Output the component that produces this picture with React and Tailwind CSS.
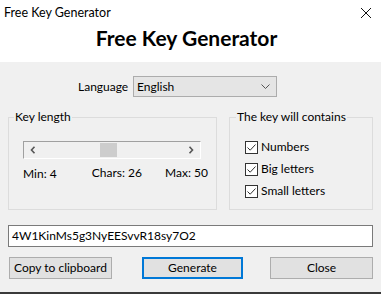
import React from "react";

const F = { fontFamily: 'Lato, "Noto Sans", sans-serif' };

function Check({ label }) {
  return (
    <div className="flex items-center h-[22px]">
      <div className="w-[13px] h-[13px] border border-[#333] bg-white flex items-center justify-center">
        <svg width="11" height="11" viewBox="0 0 11 11">
          <path d="M1.5 5.5 L4.2 8.2 L9.5 2.5" fill="none" stroke="#333" strokeWidth="1" />
        </svg>
      </div>
      <span className="ml-[3px] text-[12px] text-black leading-[16px]">{label}</span>
    </div>
  );
}

export default function App() {
  return (
    <div className="w-[381px] h-[294px] flex flex-col bg-white overflow-hidden" style={F}>
      <div className="h-[62px] bg-white flex flex-col">
        <div className="h-[25px] flex items-center justify-between pl-[4px] pr-[9px]">
          <span className="text-[12.5px] text-black leading-[16px]">Free Key Generator</span>
          <svg width="12" height="12" viewBox="0 0 12 12">
            <path d="M1 1 L11 11 M11 1 L1 11" stroke="#111" strokeWidth="1" />
          </svg>
        </div>
        <div className="flex justify-center pr-[8px]">
          <span className="text-[21px] font-bold text-black leading-[26px]">Free Key Generator</span>
        </div>
      </div>
      <div className="flex-1 bg-[#f0f0f0] flex flex-col">
        <div className="flex items-center pl-[78px] pt-[14px]">
          <span className="w-[47px] text-[12px] leading-[16px] text-black whitespace-nowrap">Language</span>
          <div className="ml-[8px] w-[144px] h-[21px] border border-[#acacac] bg-[#e5e5e5] flex items-center justify-between pl-[3px] pr-[6px]">
            <span className="text-[12px] leading-[16px] text-black">English</span>
            <svg width="9" height="5" viewBox="0 0 9 5">
              <path d="M0.5 0.5 L4.5 4.5 L8.5 0.5" fill="none" stroke="#555" strokeWidth="1" />
            </svg>
          </div>
        </div>
        <div className="flex px-[8px] gap-[12px] mt-[12px]">
          <fieldset className="w-[209px] h-[101px] border border-[#dcdcdc] p-0">
            <legend className="text-[12px] leading-[16px] text-black ml-[5px] px-[1px]">Key length</legend>
            <div className="pl-[14px] pr-[15px]">
              <div className="mt-[16px] h-[18px] border-t border-l border-[#a0a0a0] border-b border-r border-b-white border-r-white bg-[#f0f0f0] flex items-center justify-between px-[6px]">
                <svg width="6" height="8" viewBox="0 0 6 8">
                  <path d="M4.5 0.8 L1.5 4 L4.5 7.2" fill="none" stroke="#555" strokeWidth="1.6" />
                </svg>
                <div className="w-[17px] h-[14px] bg-[#cdcdcd] ml-[64px]" />
                <div className="flex-1" />
                <svg width="6" height="8" viewBox="0 0 6 8">
                  <path d="M1.5 0.8 L4.5 4 L1.5 7.2" fill="none" stroke="#555" strokeWidth="1.6" />
                </svg>
              </div>
              <div className="flex justify-between mt-[6px] text-[12px] leading-[16px] text-black mr-[-7px]">
                <span className="mt-[1px]">Min: 4</span>
                <span className="ml-[12px]">Chars: 26</span>
                <span>Max: 50</span>
              </div>
            </div>
          </fieldset>
          <fieldset className="w-[144px] h-[101px] border border-[#dcdcdc] p-0">
            <legend className="text-[12px] leading-[16px] text-black ml-[6px] px-[1px]">The key will contains</legend>
            <div className="mt-[11px] flex flex-col pl-[15px]">
              <Check label="Numbers" />
              <Check label="Big letters" />
              <Check label="Small letters" />
            </div>
          </fieldset>
        </div>
        <div className="px-[8px] mt-[15px]">
          <div className="h-[22px] border border-[#7a7a7a] bg-white flex items-center pl-[3px]">
            <span className="text-[12px] leading-[16px] text-black">4W1KinMs5g3NyEESvvR18sy7O2</span>
          </div>
        </div>
        <div className="flex pl-[9px] mt-[10px] text-[12px] leading-[16px] text-black">
          <div className="w-[103px] h-[22px] border border-[#adadad] bg-[#e1e1e1] flex items-center justify-center">Copy to clipboard</div>
          <div className="ml-[30px] w-[101px] h-[22px] border-2 border-[#0078d7] bg-[#e1e1e1] flex items-center justify-center">Generate</div>
          <div className="ml-[27px] w-[103px] h-[22px] border border-[#adadad] bg-[#e1e1e1] flex items-center justify-center">Close</div>
        </div>
      </div>
      <div className="h-[2px] bg-[#3a3a3a]" />
    </div>
  );
}
